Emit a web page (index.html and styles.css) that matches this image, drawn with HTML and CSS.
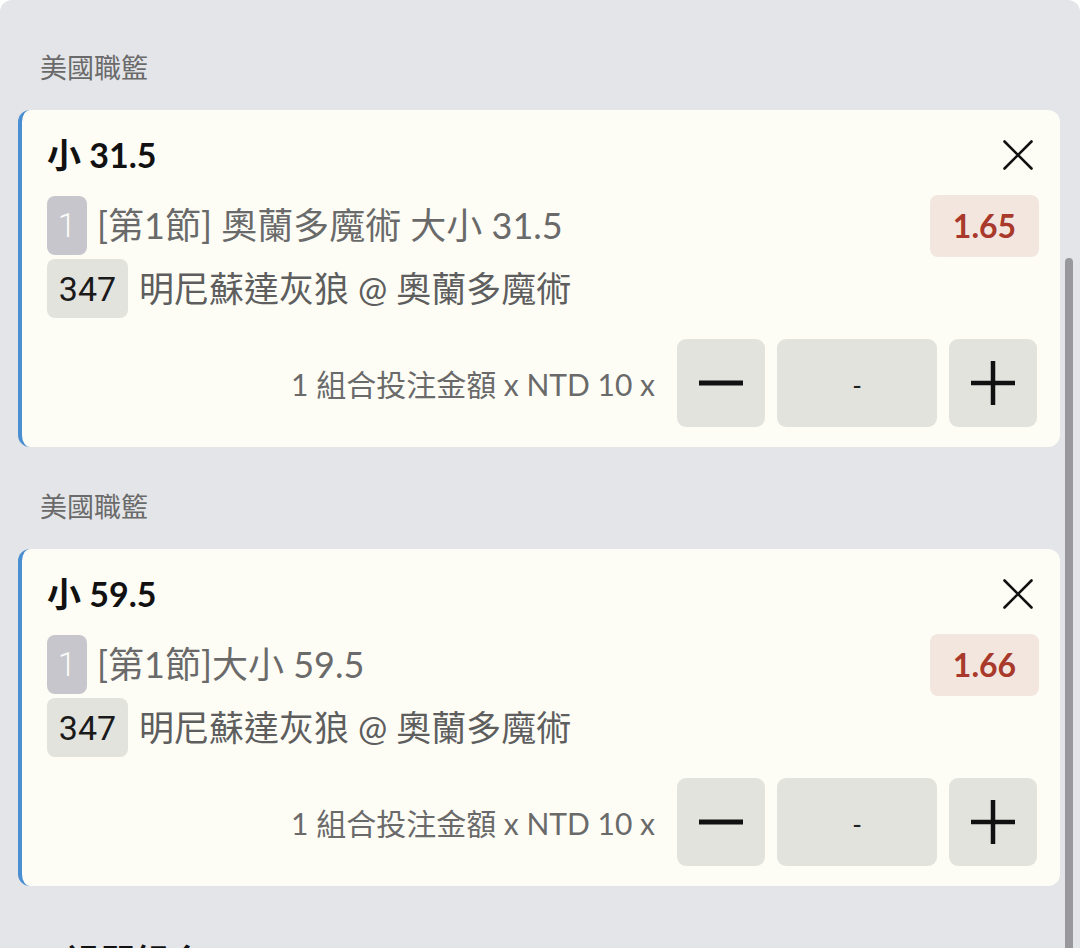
FILE: index.html
```html
<!DOCTYPE html>
<html lang="zh-Hant">
<head>
<meta charset="utf-8">
<link rel="stylesheet" href="styles.css">
</head>
<body>
<div class="sheet">
  <section class="league">
    <div class="league-name">美國職籃</div>
    <div class="bet-card">
      <div class="card-head">
        <div class="selection">小 31.5</div>
        <button class="close" aria-label="close">
          <svg viewBox="0 0 30 30" width="30" height="30"><path d="M1.5 1.5 L28.5 28.5 M28.5 1.5 L1.5 28.5" stroke="#111" stroke-width="2.6" fill="none" stroke-linecap="round"/></svg>
        </button>
      </div>
      <div class="info-row">
        <span class="num-badge">1</span>
        <span class="market">[第1節] 奧蘭多魔術 大小 31.5</span>
        <span class="odds">1.65</span>
      </div>
      <div class="info-row">
        <span class="id-badge">347</span>
        <span class="match">明尼蘇達灰狼 @ 奧蘭多魔術</span>
      </div>
      <div class="stake-row">
        <span class="stake-label">1 組合投注金額 x NTD 10 x</span>
        <button class="step step-minus" aria-label="minus"><svg viewBox="0 0 46 46" width="46" height="46"><path d="M1 23 H45" stroke="#111" stroke-width="5"/></svg></button>
        <div class="amount">-</div>
        <button class="step step-plus" aria-label="plus"><svg viewBox="0 0 46 46" width="46" height="46"><path d="M1 23 H45 M23 1 V45" stroke="#111" stroke-width="4.5"/></svg></button>
      </div>
    </div>
  </section>

  <section class="league">
    <div class="league-name">美國職籃</div>
    <div class="bet-card">
      <div class="card-head">
        <div class="selection">小 59.5</div>
        <button class="close" aria-label="close">
          <svg viewBox="0 0 30 30" width="30" height="30"><path d="M1.5 1.5 L28.5 28.5 M28.5 1.5 L1.5 28.5" stroke="#111" stroke-width="2.6" fill="none" stroke-linecap="round"/></svg>
        </button>
      </div>
      <div class="info-row">
        <span class="num-badge">1</span>
        <span class="market">[第1節]大小 59.5</span>
        <span class="odds">1.66</span>
      </div>
      <div class="info-row">
        <span class="id-badge">347</span>
        <span class="match">明尼蘇達灰狼 @ 奧蘭多魔術</span>
      </div>
      <div class="stake-row">
        <span class="stake-label">1 組合投注金額 x NTD 10 x</span>
        <button class="step step-minus" aria-label="minus"><svg viewBox="0 0 46 46" width="46" height="46"><path d="M1 23 H45" stroke="#111" stroke-width="5"/></svg></button>
        <div class="amount">-</div>
        <button class="step step-plus" aria-label="plus"><svg viewBox="0 0 46 46" width="46" height="46"><path d="M1 23 H45 M23 1 V45" stroke="#111" stroke-width="4.5"/></svg></button>
      </div>
    </div>
  </section>

  <div class="next-head"><span class="red-dot"></span>過關組合</div>
  <div class="scroll-thumb"></div>
</div>
</body>
</html>
```
FILE: styles.css
```css
* { box-sizing: border-box; }
html, body { margin: 0; padding: 0; }
body {
  background: #ffffff;
  width: 1080px;
  height: 948px;
  overflow: hidden;
  font-family: Lato, "Noto Sans CJK TC", sans-serif;
}
.sheet {
  position: relative;
  background: #e4e5e8;
  border-radius: 12px 12px 0 0;
  min-height: 948px;
  padding: 50px 20px 0 18px;
  display: flex;
  flex-direction: column;
  gap: 42px;
}
.league {
  display: flex;
  flex-direction: column;
  gap: 26px;
}
.league-name {
  font-family: "Noto Sans CJK TC", sans-serif;
  font-size: 27px;
  line-height: 34px;
  height: 34px;
  color: #6a6a6a;
  padding-left: 22px;
}
.bet-card {
  background: #fdfdf6;
  border-left: 4px solid #4a8fd2;
  border-radius: 12px;
  padding: 25px 23px 20px 25px;
  display: flex;
  flex-direction: column;
}
.card-head {
  height: 40px;
  display: flex;
  align-items: center;
  justify-content: space-between;
}
.selection {
  font-family: Lato, "Noto Sans CJK TC", sans-serif;
  font-weight: 700;
  font-size: 34px;
  line-height: 40px;
  color: #111;
}
.close {
  border: 0;
  background: none;
  padding: 0;
  width: 30px;
  height: 30px;
  margin-right: 4px;
  display: flex;
}
.info-row {
  height: 59px;
  display: flex;
  align-items: center;
  margin-top: 4px;
  font-family: Lato, "Noto Sans CJK TC", sans-serif;
  font-size: 35px;
}
.card-head + .info-row { margin-top: 21px; }
.num-badge {
  width: 40px;
  height: 59px;
  border-radius: 8px;
  background: #c6c6cc;
  color: #fbfbf8;
  display: flex;
  align-items: center;
  justify-content: center;
  font-family: Roboto, sans-serif;
  font-size: 33px;
  font-weight: 300;
}
.market {
  margin-left: 10px;
  color: #6a6a6a;
  flex: 1;
  white-space: nowrap;
  font-size: 36px;
  padding-bottom: 5px;
}
.odds {
  width: 109px;
  height: 62px;
  margin-right: -2px;
  border-radius: 8px;
  background: #f3e6df;
  color: #a8392b;
  font-family: Lato, sans-serif;
  font-weight: 700;
  font-size: 32px;
  display: flex;
  align-items: center;
  justify-content: center;
}
.id-badge {
  width: 81px;
  height: 59px;
  border-radius: 8px;
  background: #e3e3de;
  color: #1a1a1a;
  display: flex;
  align-items: center;
  justify-content: center;
  font-family: Roboto, sans-serif;
  font-size: 34px;
}
.match {
  margin-left: 11px;
  color: #5e5e5e;
  white-space: nowrap;
  padding-bottom: 4px;
}
.stake-row {
  margin-top: 21px;
  height: 88px;
  display: flex;
  align-items: center;
  justify-content: flex-end;
  gap: 12px;
}
.stake-label {
  font-family: Lato, "Noto Sans CJK TC", sans-serif;
  font-size: 30px;
  color: #6a6a6a;
  margin-right: 10px;
  white-space: nowrap;
}
.step {
  width: 88px;
  height: 88px;
  border: 0;
  border-radius: 9px;
  background: #e3e3de;
  padding: 0;
  display: flex;
  align-items: center;
  justify-content: center;
}
.amount {
  width: 160px;
  height: 88px;
  border-radius: 9px;
  background: #e3e3de;
  display: flex;
  align-items: center;
  justify-content: center;
  font-family: Lato, sans-serif;
  font-size: 26px;
  color: #222;
  padding-top: 4px;
}
.next-head {
  display: flex;
  align-items: center;
  gap: 20px;
  padding-left: 17px;
  padding-top: 12px;
  font-family: "Noto Sans CJK TC", sans-serif;
  font-weight: 700;
  font-size: 34px;
  line-height: 40px;
  color: #111;
}
.red-dot {
  width: 12px;
  height: 12px;
  border-radius: 50%;
  background: #d9342b;
}
.scroll-thumb {
  position: absolute;
  left: 1065px;
  top: 258px;
  width: 8px;
  height: 760px;
  border-radius: 4px;
  background: #99999d;
}
```
